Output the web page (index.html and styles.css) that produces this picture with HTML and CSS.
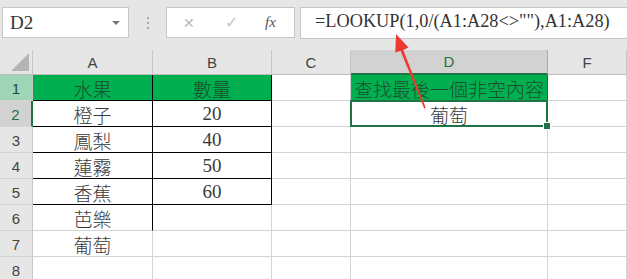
FILE: index.html
```html
<!DOCTYPE html>
<html lang="zh-Hant">
<head>
  <meta charset="UTF-8" />
  <title>LOOKUP</title>
  <link rel="stylesheet" href="styles.css">
</head>
<body>
  <div class="toolbar">
    <div class="namebox">
      <span>D2</span>
      <span class="caret"></span>
    </div>
    <div class="dots"><i></i><i></i><i></i></div>
    <div class="fxbox">
      <span class="cancel">✕</span>
      <span class="enter">✓</span>
      <span class="fx">fx</span>
    </div>
    <div class="formula">=LOOKUP(1,0/(A1:A28&lt;&gt;""),A1:A28)</div>
  </div>

  <div class="sheet">
    <div class="corner"><span></span></div>
    <div class="colhead">A</div>
    <div class="colhead">B</div>
    <div class="colhead">C</div>
    <div class="colhead sel">D</div>
    <div class="colhead">F</div>

    <div class="rowhead row1">1</div>
    <div class="cell boxed green">水果</div>
    <div class="cell boxed green">數量</div>
    <div class="cell"></div>
    <div class="cell green title">查找最後一個非空內容</div>
    <div class="cell"></div>

    <div class="rowhead sel">2</div>
    <div class="cell boxed">橙子</div>
    <div class="cell boxed">20</div>
    <div class="cell"></div>
    <div class="cell active">葡萄</div>
    <div class="cell"></div>

    <div class="rowhead">3</div>
    <div class="cell boxed">鳳梨</div>
    <div class="cell boxed">40</div>
    <div class="cell"></div>
    <div class="cell"></div>
    <div class="cell"></div>

    <div class="rowhead">4</div>
    <div class="cell boxed">蓮霧</div>
    <div class="cell boxed">50</div>
    <div class="cell"></div>
    <div class="cell"></div>
    <div class="cell"></div>

    <div class="rowhead">5</div>
    <div class="cell boxed">香蕉</div>
    <div class="cell boxed">60</div>
    <div class="cell"></div>
    <div class="cell"></div>
    <div class="cell"></div>

    <div class="rowhead">6</div>
    <div class="cell edge">芭樂</div>
    <div class="cell"></div>
    <div class="cell"></div>
    <div class="cell"></div>
    <div class="cell"></div>

    <div class="rowhead">7</div>
    <div class="cell">葡萄</div>
    <div class="cell"></div>
    <div class="cell"></div>
    <div class="cell"></div>
    <div class="cell"></div>

    <div class="rowhead">8</div>
    <div class="cell"></div>
    <div class="cell"></div>
    <div class="cell"></div>
    <div class="cell"></div>
    <div class="cell"></div>
  </div>

  <svg class="arrow" width="627" height="279" viewBox="0 0 627 279">
    <polygon points="396,34 408.5,47.6 403.3,50 425.8,108 424.2,108.4 400.6,51 395.3,52.4" fill="#ee3b2f" />
  </svg>
</body>
</html>
```

FILE: styles.css
```css
body {
  margin: 0;
  width: 627px;
  height: 279px;
  overflow: hidden;
  background: #e6e6e6;
  position: relative;
  font-family: "Liberation Serif", "Noto Sans CJK TC", serif;
  color: #2b2b2b;
}

/* formula bar */
.toolbar {
  display: flex;
  align-items: flex-start;
  height: 50px;
  padding: 7px 0 0 2px;
  box-sizing: border-box;
}

.namebox {
  width: 127px;
  height: 31px;
  box-sizing: border-box;
  background: #fff;
  border: 1px solid #c6c6c6;
  display: flex;
  align-items: center;
  justify-content: space-between;
  padding: 0 8px 0 7px;
  font-size: 19px;
  color: #333;
}

.caret {
  width: 0;
  height: 0;
  border-left: 4px solid transparent;
  border-right: 4px solid transparent;
  border-top: 4px solid #777;
  margin-top: 1px;
}

.dots {
  width: 37px;
  height: 31px;
  display: flex;
  flex-direction: column;
  align-items: center;
  justify-content: center;
  gap: 3px;
}

.dots i {
  width: 2px;
  height: 2px;
  background: #a8a8a8;
}

.fxbox {
  width: 129px;
  height: 31px;
  box-sizing: border-box;
  background: #fff;
  border: 1px solid #c6c6c6;
  display: flex;
  align-items: center;
  padding-left: 16px;
  font-family: "DejaVu Sans", sans-serif;
}

.cancel {
  color: #b8b8b8;
  font-size: 14px;
  width: 42px;
}

.enter {
  color: #c4c4c4;
  font-size: 16px;
  font-weight: bold;
  width: 40px;
}

.fx {
  font-family: "Liberation Serif", serif;
  font-style: italic;
  font-size: 15px;
  color: #555;
}

.formula {
  margin-left: 5px;
  flex: 1;
  height: 32px;
  box-sizing: border-box;
  background: #fff;
  border: 1px solid #c6c6c6;
  border-right: none;
  padding: 3px 0 0 14px;
  font-size: 18.3px;
  color: #333;
}

/* sheet grid */
.sheet {
  display: grid;
  grid-template-columns: 33px 120px 119px 79px 197px 79px;
  grid-template-rows: 25px repeat(8, 26px);
  background: #fff;
}

.corner {
  background: #e6e6e6;
  border-right: 1px solid #c6c6c6;
  border-bottom: 1px solid #bdbdbd;
  display: flex;
  align-items: flex-end;
  justify-content: flex-end;
  padding: 0 3px 3px 0;
}

.corner span {
  width: 0;
  height: 0;
  border-left: 18px solid transparent;
  border-bottom: 18px solid #b5b5b5;
}

.colhead {
  background: #e6e6e6;
  border-right: 1px solid #c6c6c6;
  border-bottom: 1px solid #bdbdbd;
  display: flex;
  align-items: center;
  justify-content: center;
  font-family: "Liberation Sans", sans-serif;
  font-size: 15px;
  color: #444;
}

.colhead.sel {
  background: #d2d2d2;
  color: #217346;
  border-bottom: 2px solid #217346;
  border-right-color: #ababab;
}

.rowhead {
  background: #e6e6e6;
  border-right: 1px solid #c6c6c6;
  border-bottom: 1px solid #d4d4d4;
  display: flex;
  align-items: center;
  justify-content: center;
  font-family: "Liberation Sans", sans-serif;
  font-size: 15px;
  color: #444;
  padding-top: 2px;
  box-sizing: border-box;
}

.rowhead.row1 {
  background: #9fd5b7;
  color: #1f4a31;
}

.rowhead.sel {
  background: #d2d2d2;
  color: #217346;
  border-right: 2px solid #217346;
}

.cell {
  border-right: 1px solid #d4d4d4;
  border-bottom: 1px solid #d4d4d4;
  display: flex;
  align-items: center;
  justify-content: center;
  font-size: 19px;
  font-weight: 300;
  color: #3a3a3a;
  padding-top: 1px;
  box-sizing: border-box;
  white-space: nowrap;
}

.cell.boxed {
  border-right-color: #000;
  border-bottom-color: #000;
}

.cell.edge {
  border-right-color: #000;
}

.cell.green {
  background: #00b050;
  color: #1e4d2c;
}

.cell.title {
  border-right-color: #1e6b3c;
  border-bottom-color: #1e6b3c;
}

.cell.active {
  position: relative;
}

.cell.active::after {
  content: "";
  position: absolute;
  top: -1px;
  left: -1px;
  right: -1px;
  bottom: -1px;
  border: 2px solid #217346;
}

.cell.active::before {
  content: "";
  position: absolute;
  right: -4px;
  bottom: -4px;
  width: 6px;
  height: 6px;
  background: #217346;
  border: 1px solid #fff;
  z-index: 1;
}

.arrow {
  position: absolute;
  top: 0;
  left: 0;
  pointer-events: none;
}
```
